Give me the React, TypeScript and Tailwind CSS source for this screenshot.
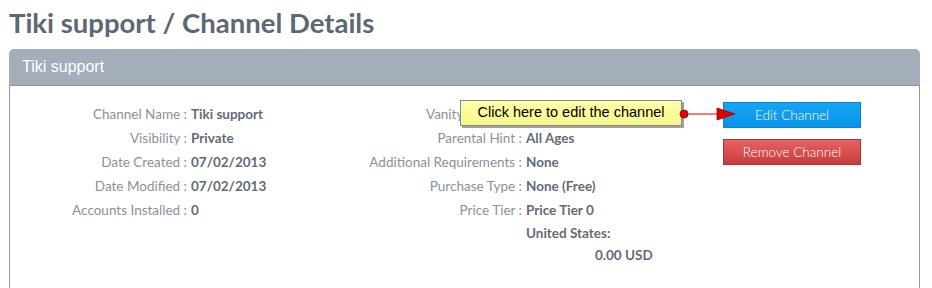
const left: [string, string][] = [
  ['Channel Name', 'Tiki support'],
  ['Visibility', 'Private'],
  ['Date Created', '07/02/2013'],
  ['Date Modified', '07/02/2013'],
  ['Accounts Installed', '0'],
]

const right: [string, string][] = [
  ['Vanity Account', ''],
  ['Parental Hint', 'All Ages'],
  ['Additional Requirements', 'None'],
  ['Purchase Type', 'None (Free)'],
  ['Price Tier', 'Price Tier 0'],
]

function Row({ label, value, width }: { label: string; value: string; width: string }) {
  return (
    <div className="flex h-6 items-center">
      <span className={`${width} text-right text-[#8a919b]`}>{label} :</span>
      <span className="pl-[4px] font-bold text-[#636b76]">{value}</span>
    </div>
  )
}

export default function App() {
  return (
    <div className="h-[288px] w-[932px] overflow-hidden bg-white font-['Lato',sans-serif]">
      <h1 className="pl-[9px] pt-[6px] text-[27.5px] font-bold leading-[34px] text-[#5d6876]">
        Tiki support / Channel Details
      </h1>

      <div className="ml-[9px] mt-[9px] w-[911px]">
        {/* Header */}
        <div className="flex h-[37px] items-center rounded-t-[5px] border-b border-[#8e96a0] bg-[#a4aebb] pl-[13px] font-['Liberation_Sans',sans-serif] text-[16px] text-white">
          Tiki support
        </div>

        {/* Body */}
        <div className="flex h-[220px] border-x border-[#9a9a9a] pt-4 text-[13.5px]">
          <div className="w-[329px]">
            {left.map(([l, v]) => (
              <Row key={l} label={l} value={v} width="w-[177px]" />
            ))}
          </div>

          <div className="relative w-[384px]">
            {right.map(([l, v]) => (
              <Row key={l} label={l} value={v} width="w-[183px]" />
            ))}
            <div className="flex h-[22px] items-center pl-[187px] font-bold text-[#636b76]">United States:</div>
            <div className="flex h-[22px] items-center pl-[256px] font-bold text-[#636b76]">0.00 USD</div>

            {/* Callout overlay */}
            <div className="absolute left-[121px] top-[-2px] flex h-[26px] w-[222px] items-center justify-center border border-[#8a8a8a] bg-gradient-to-b from-[#ffffa8] to-[#f7f78c] font-['Liberation_Sans',sans-serif] text-[14.5px] text-black shadow-[2px_2px_0_#a0a0a0]">
              Click here to edit the channel
            </div>
            <svg className="absolute left-[339px] top-[3px]" width="60" height="18" viewBox="0 0 60 18">
              <line x1="6" y1="9" x2="40" y2="9" stroke="#e00000" strokeWidth="1.2" />
              <circle cx="6" cy="9" r="4" fill="#e00000" stroke="#a00000" strokeWidth="0.8" />
              <polygon points="39,3 57,9 39,15" fill="#e00000" stroke="#a00000" strokeWidth="0.8" />
            </svg>
          </div>

          <div className="flex w-[138px] flex-col gap-[11px]">
            <button className="h-[26px] border border-[#0b87d0] bg-gradient-to-b from-[#16a4f4] to-[#0794e8] text-[13.5px] font-light text-white">
              Edit Channel
            </button>
            <button className="h-[26px] border border-[#b23434] bg-gradient-to-b from-[#e86262] to-[#c63c3c] text-[13.5px] font-light text-white">
              Remove Channel
            </button>
          </div>
        </div>
      </div>
    </div>
  )
}
